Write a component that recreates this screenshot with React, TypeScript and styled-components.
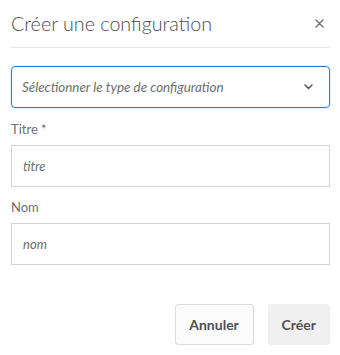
import React from "react";
import styled, { createGlobalStyle } from "styled-components";

const Global = createGlobalStyle`
  html, body { margin: 0; padding: 0; background: #ffffff; }
  body { font-family: "Lato", "Open Sans", sans-serif; }
  * { box-sizing: border-box; }
`;

const Dialog = styled.div`
  width: 340px;
  height: 355px;
  padding: 0 10px 0 11px;
  display: flex;
  flex-direction: column;
  background: #fff;
`;

const Header = styled.div`
  display: flex;
  align-items: center;
  justify-content: space-between;
  height: 48px;
  border-bottom: 1px solid #e6e6e6;
  padding-bottom: 1px;
`;

const Title = styled.h1`
  margin: 0;
  font-family: "Lato", sans-serif;
  font-weight: 300;
  font-size: 19.7px;
  color: #4e4e4e;
`;

const CloseButton = styled.button`
  border: 0;
  background: transparent;
  padding: 0;
  margin-right: 5px;
  width: 12px;
  height: 12px;
  display: flex;
  align-items: center;
  justify-content: center;
  cursor: pointer;
`;

const Body = styled.div`
  display: flex;
  flex-direction: column;
  padding-top: 18px;
`;

const Select = styled.div`
  height: 42px;
  border: 1px solid #2680eb;
  border-radius: 4px;
  box-shadow: 0 0 0 1px rgba(38, 128, 235, 0.12);
  display: flex;
  align-items: center;
  justify-content: space-between;
  padding: 0 16px 0 10px;
`;

const Placeholder = styled.span<{ $size?: number }>`
  font-family: "Lato", sans-serif;
  font-style: italic;
  font-size: ${(p) => p.$size ?? 13}px;
  color: #6e6e6e;
`;

const Field = styled.div<{ $top: number }>`
  display: flex;
  flex-direction: column;
  margin-top: ${(p) => p.$top}px;
`;

const Label = styled.label`
  font-family: "Lato", sans-serif;
  font-size: 13px;
  color: #6e6e6e;
  line-height: 16px;
  margin-bottom: 8px;
`;

const Input = styled.div`
  height: 42px;
  border: 1px solid #d3d3d3;
  display: flex;
  align-items: center;
  padding: 0 11px;
`;

const Footer = styled.div`
  display: flex;
  justify-content: flex-end;
  gap: 14px;
  margin-top: 39px;
`;

const Button = styled.button<{ $muted?: boolean }>`
  height: 41px;
  padding: 0 13px;
  border-radius: 3px;
  border: 1px solid ${(p) => (p.$muted ? "#eeeeee" : "#dcdcdc")};
  background: ${(p) => (p.$muted ? "#f0f0f0" : "#fbfbfb")};
  font-family: "Lato", sans-serif;
  font-weight: 700;
  font-size: 14px;
  color: #505050;
  min-width: ${(p) => (p.$muted ? "61px" : "79px")};
`;

export default function App() {
  return (
    <>
      <Global />
      <Dialog>
        <Header>
          <Title>Créer une configuration</Title>
          <CloseButton aria-label="Fermer">
            <svg width="9" height="9" viewBox="0 0 9 9">
              <path d="M1 1L8 8M8 1L1 8" stroke="#6e6e6e" strokeWidth="1.4" strokeLinecap="round" />
            </svg>
          </CloseButton>
        </Header>
        <Body>
          <Select>
            <Placeholder $size={13.4}>Sélectionner le type de configuration</Placeholder>
            <svg width="9" height="6" viewBox="0 0 9 6">
              <path d="M1 1L4.5 4.5L8 1" stroke="#555" strokeWidth="1.5" fill="none" strokeLinecap="round" strokeLinejoin="round" />
            </svg>
          </Select>
          <Field $top={13}>
            <Label>Titre *</Label>
            <Input>
              <Placeholder>titre</Placeholder>
            </Input>
          </Field>
          <Field $top={12}>
            <Label>Nom</Label>
            <Input>
              <Placeholder>nom</Placeholder>
            </Input>
          </Field>
          <Footer>
            <Button>Annuler</Button>
            <Button $muted>Créer</Button>
          </Footer>
        </Body>
      </Dialog>
    </>
  );
}
